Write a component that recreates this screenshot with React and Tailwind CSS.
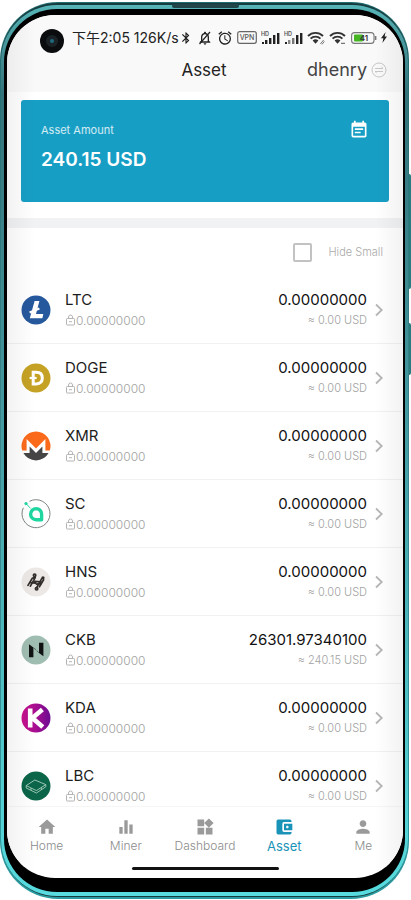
import {
  MdAccountBalanceWallet,
  MdAlarm,
  MdBluetooth,
  MdEqualizer,
  MdEventNote,
  MdHome,
  MdNotificationsNone,
  MdPerson,
  MdWidgets,
} from "react-icons/md";

function LtcIcon() {
  return (
    <svg viewBox="0 0 30 30" className="size-[30px]" aria-hidden="true">
      <circle cx="15" cy="15" r="14.5" fill="#25589c" />
      <path d="M13.6 6h4.8l-3.4 13h7.3l-.9 4.2H8.8z" fill="#fff" />
      <path d="M8.6 17.6l9.8-4.2" stroke="#fff" strokeWidth="2.2" />
    </svg>
  );
}

function DogeIcon() {
  return (
    <svg viewBox="0 0 30 30" className="size-[30px]" aria-hidden="true">
      <circle cx="15" cy="15" r="14.5" fill="#c5a224" />
      <path
        d="M12.2 9.3h3.1c4.2 0 6 2.4 6 5.8s-1.8 5.8-6 5.8h-3.1z"
        fill="none"
        stroke="#fff"
        strokeWidth="3"
      />
      <path d="M8.6 15h7" stroke="#fff" strokeWidth="2.2" />
    </svg>
  );
}

function XmrIcon() {
  return (
    <svg viewBox="0 0 30 30" className="size-[30px]" aria-hidden="true">
      <path
        d="M15 .5A14.5 14.5 0 0 0 1.2 19.5h4.4V8L15 17.4 24.4 8v11.5h4.4A14.5 14.5 0 0 0 15 .5z"
        fill="#fb6a1b"
      />
      <path
        d="M12.8 19.7L8.6 15.5v6.6H2.4a14.5 14.5 0 0 0 25.2 0h-6.2v-6.6l-4.2 4.2L15 21.9z"
        fill="#454545"
      />
    </svg>
  );
}

function ScIcon() {
  return (
    <svg viewBox="0 0 30 30" className="size-[30px]" aria-hidden="true">
      <path
        d="M8.5 2.3A14 14 0 1 1 2.3 8.8"
        fill="none"
        stroke="#7c8583"
        strokeWidth="1"
      />
      <circle cx="5" cy="4.6" r="1.6" fill="#1fd6a0" />
      <path d="M5 4.6l4.6 4.8" stroke="#1fd6a0" strokeWidth="1" />
      <path
        d="M15.2 9.6a5.6 5.6 0 1 0 0 11.2h5.4v-5.6a5.5 5.5 0 0 0-5.4-5.6z"
        fill="none"
        stroke="#1fd6a0"
        strokeWidth="3.4"
        strokeLinejoin="round"
      />
    </svg>
  );
}

function HnsIcon() {
  return (
    <svg viewBox="0 0 30 30" className="size-[30px]" aria-hidden="true">
      <circle cx="15" cy="15" r="14.5" fill="#ece8e5" />
      <g fill="none" stroke="#302d2b" strokeWidth="1.7" strokeLinecap="round">
        <path d="M7 18.4l4.2-7 2.6-1.4M9.4 19.2l4.8-8.6" />
        <path d="M15.800 20.400l4.800-8.600M18.400 19.800l4.200-7" />
        <path d="M9.600 15.600l5 .6M13.600 14.400l6.400.4M15.400 17.200l4.400-.6" />
        <circle cx="13.600" cy="8.200" r="1.200" />
        <circle cx="15.600" cy="21.800" r="1.200" />
        <circle cx="22" cy="10.800" r=".8" />
      </g>
    </svg>
  );
}

function CkbIcon() {
  return (
    <svg viewBox="0 0 30 30" className="size-[30px]" aria-hidden="true">
      <circle cx="15" cy="15" r="14.5" fill="#a0bdb2" />
      <path d="M8 9.200l4.400 3.200v9.800H8zM18 7.800h4.400v13.400L18 18z" fill="#101312" />
      <path d="M12.400 12.800l2.600 2M15.600 15.600l2.400 2.200" stroke="#56695f" strokeWidth="1" />
    </svg>
  );
}

function KdaIcon() {
  return (
    <svg viewBox="0 0 30 30" className="size-[30px]" aria-hidden="true">
      <defs>
        <linearGradient id="kda" x1="0" x2="1">
          <stop offset="0" stopColor="#c8108c" />
          <stop offset=".5" stopColor="#a60e90" />
          <stop offset="1" stopColor="#6b0c92" />
        </linearGradient>
      </defs>
      <circle cx="15" cy="15" r="14.5" fill="url(#kda)" />
      <path
        d="M9.200 5.600v19M21.400 6.600L11.400 15l10.400 9"
        fill="none"
        stroke="#fff"
        strokeWidth="4.600"
      />
    </svg>
  );
}

function LbcIcon() {
  return (
    <svg viewBox="0 0 30 30" className="size-[30px]" aria-hidden="true">
      <circle cx="15" cy="15" r="14.5" fill="#0b6548" />
      <g fill="none" stroke="#a9d0c0" strokeWidth=".9" strokeLinejoin="round">
        <path d="M5.2 14.6L13.8 9l11 4.6-9.4 6z" />
        <path d="M5.2 14.6v2.4l10.2 5 9.4-6.2v-2.2M10 17v2.2M20.4 16.6v2.4" />
      </g>
    </svg>
  );
}

const coins = [
  { code: "LTC", Icon: LtcIcon, amount: "0.00000000", usd: "0.00" },
  { code: "DOGE", Icon: DogeIcon, amount: "0.00000000", usd: "0.00" },
  { code: "XMR", Icon: XmrIcon, amount: "0.00000000", usd: "0.00" },
  { code: "SC", Icon: ScIcon, amount: "0.00000000", usd: "0.00" },
  { code: "HNS", Icon: HnsIcon, amount: "0.00000000", usd: "0.00" },
  { code: "CKB", Icon: CkbIcon, amount: "26301.97340100", usd: "240.15" },
  { code: "KDA", Icon: KdaIcon, amount: "0.00000000", usd: "0.00" },
  { code: "LBC", Icon: LbcIcon, amount: "0.00000000", usd: "0.00" },
];

const tabs = [
  { label: "Home", Icon: MdHome },
  { label: "Miner", Icon: MdEqualizer },
  { label: "Dashboard", Icon: MdWidgets },
  { label: "Asset", Icon: MdAccountBalanceWallet, active: true },
  { label: "Me", Icon: MdPerson },
];

function Signal({ faded }) {
  return (
    <svg viewBox="0 0 19 14" className="h-3.5 w-[19px]" aria-hidden="true">
      <text x="0" y="4.6" fontSize="5.5" fontWeight="600" fill="#555">
        HD
      </text>
      <g fill="#222">
        <rect x="1" y="11" width="2" height="2" />
        <rect x="4" y="9" width="2.4" height="4" fill={faded ? "#888" : "#222"} />
        <rect x="8" y="7" width="2.4" height="6" fill={faded ? "#777" : "#222"} />
        <rect x="12" y="4" width="2.4" height="9" />
        <rect x="16" y="2" width="2.4" height="11" />
      </g>
    </svg>
  );
}

function Wifi({ children }) {
  return (
    <svg viewBox="0 0 18 14" className="h-3.5 w-[18px]" aria-hidden="true">
      <g fill="none" stroke="#333" strokeWidth="1.9">
        <path d="M1 5a10.6 10.6 0 0 1 15 0" />
        <path d="M3.6 7.6a7 7 0 0 1 9.8 0" />
      </g>
      <path d="M5.6 9.6a4.1 4.1 0 0 1 5.8 0L8.5 12.8z" fill="#333" />
      {children}
    </svg>
  );
}

function StatusBar() {
  return (
    <div className="flex h-[45px] items-center pr-4 pl-[33px]">
      <span className="mt-1.5 flex size-6 shrink-0 items-center justify-center rounded-full bg-[#0b0c0e]">
        <span className="flex size-3 items-center justify-center rounded-full bg-[#1b2226]">
          <span className="size-1 rounded-full bg-[#1f6a80]" />
        </span>
      </span>
      <span className="ml-2 shrink-0 text-sm leading-4 whitespace-nowrap text-[#222]">
        下午2:05 126K/s
      </span>
      <div className="flex flex-1 items-center justify-between">
        <MdBluetooth className="size-3.5 text-[#222]" />
        <span className="relative flex">
          <MdNotificationsNone className="size-4 text-[#222]" />
          <svg viewBox="0 0 16 16" className="absolute inset-0 size-4" aria-hidden="true">
            <path d="M2.5 14L13 2" stroke="#222" strokeWidth="1.2" />
          </svg>
        </span>
        <MdAlarm className="size-4 text-[#222]" />
        <svg viewBox="0 0 20 13" className="h-[13px] w-5" aria-hidden="true">
          <rect x=".7" y=".7" width="18.6" height="11.6" rx="2" fill="none" stroke="#666" strokeWidth="1.2" />
          <text x="10" y="9" fontSize="7" fontWeight="500" textAnchor="middle" fill="#555">
            VPN
          </text>
        </svg>
        <Signal />
        <Signal faded />
        <Wifi>
          <path d="M13.4 13l3.2-4M15 13.4l2.4-3" stroke="#777" strokeWidth="1" />
        </Wifi>
        <Wifi>
          <path d="M12 12.4h4" stroke="#777" strokeWidth="1.2" />
        </Wifi>
        <svg viewBox="0 0 26 12" className="h-3 w-[26px]" aria-hidden="true">
          <rect x=".6" y=".6" width="22.4" height="10.8" rx="3" fill="none" stroke="#777" strokeWidth="1.1" />
          <path d="M24.6 4v4" stroke="#777" strokeWidth="1.6" />
          <rect x="3" y="2.5" width="9" height="7" rx="1" fill="#45b524" />
          <text x="13" y="8.8" fontSize="8" fontWeight="600" textAnchor="middle" fill="#333">
            41
          </text>
        </svg>
        <svg viewBox="0 0 6 11" className="h-[11px] w-1.5" aria-hidden="true">
          <path d="M4.6 0L0 6.2h2.4L1.4 11 6 4.6H3.6z" fill="#222" />
        </svg>
      </div>
    </div>
  );
}

function LockIcon() {
  return (
    <svg viewBox="0 0 11 12" className="h-3 w-[11px]" aria-hidden="true">
      <g fill="none" stroke="#b4b4b4" strokeWidth="1">
        <rect x="1.5" y="4.5" width="8" height="6.5" rx=".8" />
        <path d="M3.5 4.5V3a2 2 0 0 1 4 0v1.5M4 7.7h3" />
      </g>
    </svg>
  );
}

function CoinRow({ code, Icon, amount, usd }) {
  return (
    <li className="flex h-[68px] shrink-0 items-center border-b border-[#f1f1f1] pr-5 pl-3.5">
      <Icon />
      <div className="ml-3.5 flex-1">
        <div className="text-[15px] leading-[21px] text-[#1c1c1c]">{code}</div>
        <div className="flex items-center text-xs leading-[21px] font-light text-[#a2a2a2]">
          <LockIcon />
          0.00000000
        </div>
      </div>
      <div className="text-right">
        <div className="text-[15px] leading-[21px] text-[#111]">{amount}</div>
        <div className="text-[11px] leading-[21px] font-light text-[#a2a2a2]">≈ {usd} USD</div>
      </div>
      <svg viewBox="0 0 8 14" className="ml-2 h-3.5 w-2" aria-hidden="true">
        <path d="M1 1.5L6.8 7 1 12.5" fill="none" stroke="#b5b5b5" strokeWidth="1.8" />
      </svg>
    </li>
  );
}

export default function App() {
  return (
    <div className="relative h-screen bg-white pt-0.5 pr-0.5 pb-px font-['Inter','Noto_Sans_CJK_SC',sans-serif]">
      <span className="absolute top-[174px] right-0 h-[115px] w-1 rounded-r-xs bg-[#277c80]" />
      <span className="absolute top-[323px] right-0 h-[52px] w-1 rounded-r-xs bg-[#277c80]" />
      <div className="relative h-full rounded-[58px] bg-linear-to-b from-[#216d70] via-[#3d858b] to-[#2b9ba0] px-px pt-px pb-0.5">
        <div className="h-full rounded-[57px] bg-[#173c40] pt-0.5 pb-px">
          <div className="h-full rounded-[56px] bg-linear-to-b from-[#56b5b7] via-[#35727a] via-10% to-[#58dcdf] px-[3px] pt-1 pb-1">
            <div className="h-full rounded-[53px] bg-black pt-1.5 pr-0.5 pb-3.5 pl-[3px]">
              <div className="relative flex h-full flex-col overflow-hidden rounded-[48px] bg-white">
                <header className="bg-[#f9f9f9] pb-3">
                  <StatusBar />
                  <div className="grid h-5 grid-cols-3 items-center pr-4 pl-3.5">
                    <h1 className="col-start-2 text-center text-[17px] leading-5 text-[#222]">Asset</h1>
                    <button type="button" className="flex items-center justify-end gap-1 text-lg leading-5 text-[#444]">
                      dhenry
                      <svg viewBox="0 0 16 16" className="size-4" aria-hidden="true">
                        <g fill="none" stroke="#c6c6c6">
                          <circle cx="8" cy="8" r="7" />
                          <path d="M4 6.5h8L10.4 5M12 9.5H4L5.600 11" />
                        </g>
                      </svg>
                    </button>
                  </div>
                </header>

                <section className="px-3.5 pt-2 pb-4">
                  <div className="flex h-[102px] items-start justify-between rounded-[3px] bg-[#179ec5] p-5 text-white">
                    <div>
                      <div className="text-[11px] leading-5 text-white/80">Asset Amount</div>
                      <div className="mt-2 text-[19px] leading-6 font-semibold">240.15 USD</div>
                    </div>
                    <button type="button" aria-label="Asset history">
                      <MdEventNote className="size-5" />
                    </button>
                  </div>
                </section>
                <div className="h-2.5 shrink-0 bg-[#f0f2f3]" />

                <label className="flex h-12 shrink-0 items-center justify-end gap-4 pr-5 text-[11px] font-light text-[#aaa]">
                  <input
                    type="checkbox"
                    className="size-[19px] appearance-none rounded-xs border-2 border-[#c2c2c2] bg-white checked:bg-[#179ec5]"
                  />
                  Hide Small
                </label>

                <ul className="flex min-h-0 flex-1 flex-col overflow-hidden">
                  {coins.map((coin) => (
                    <CoinRow key={coin.code} {...coin} />
                  ))}
                </ul>

                <nav className="flex h-[61px] shrink-0 border-t border-[#f6f6f6] bg-white pt-2.5">
                  {tabs.map(({ label, Icon, active }) => (
                    <a
                      key={label}
                      href="#"
                      className={
                        active
                          ? "flex flex-1 flex-col items-center text-[13px] leading-[18px] text-[#1a93b8]"
                          : "flex flex-1 flex-col items-center text-xs leading-[18px] font-light text-[#8c8c8c]"
                      }
                    >
                      <Icon className={active ? "size-5" : "size-5 text-[#9a9a9a]"} />
                      {label}
                    </a>
                  ))}
                </nav>
                <div className="mx-auto mb-2 h-[3px] w-[147px] shrink-0 rounded-full bg-[#111]" />

                <span className="pointer-events-none absolute inset-y-0 left-0 w-7 bg-linear-to-r from-black/5 to-transparent" />
                <span className="pointer-events-none absolute inset-y-0 right-0 w-7 bg-linear-to-l from-black/5 to-transparent" />
              </div>
            </div>
          </div>
        </div>
      </div>
      <span className="absolute top-1 left-[172px] h-1 w-[67px] rounded-full bg-[#20464a]" />
    </div>
  );
}
